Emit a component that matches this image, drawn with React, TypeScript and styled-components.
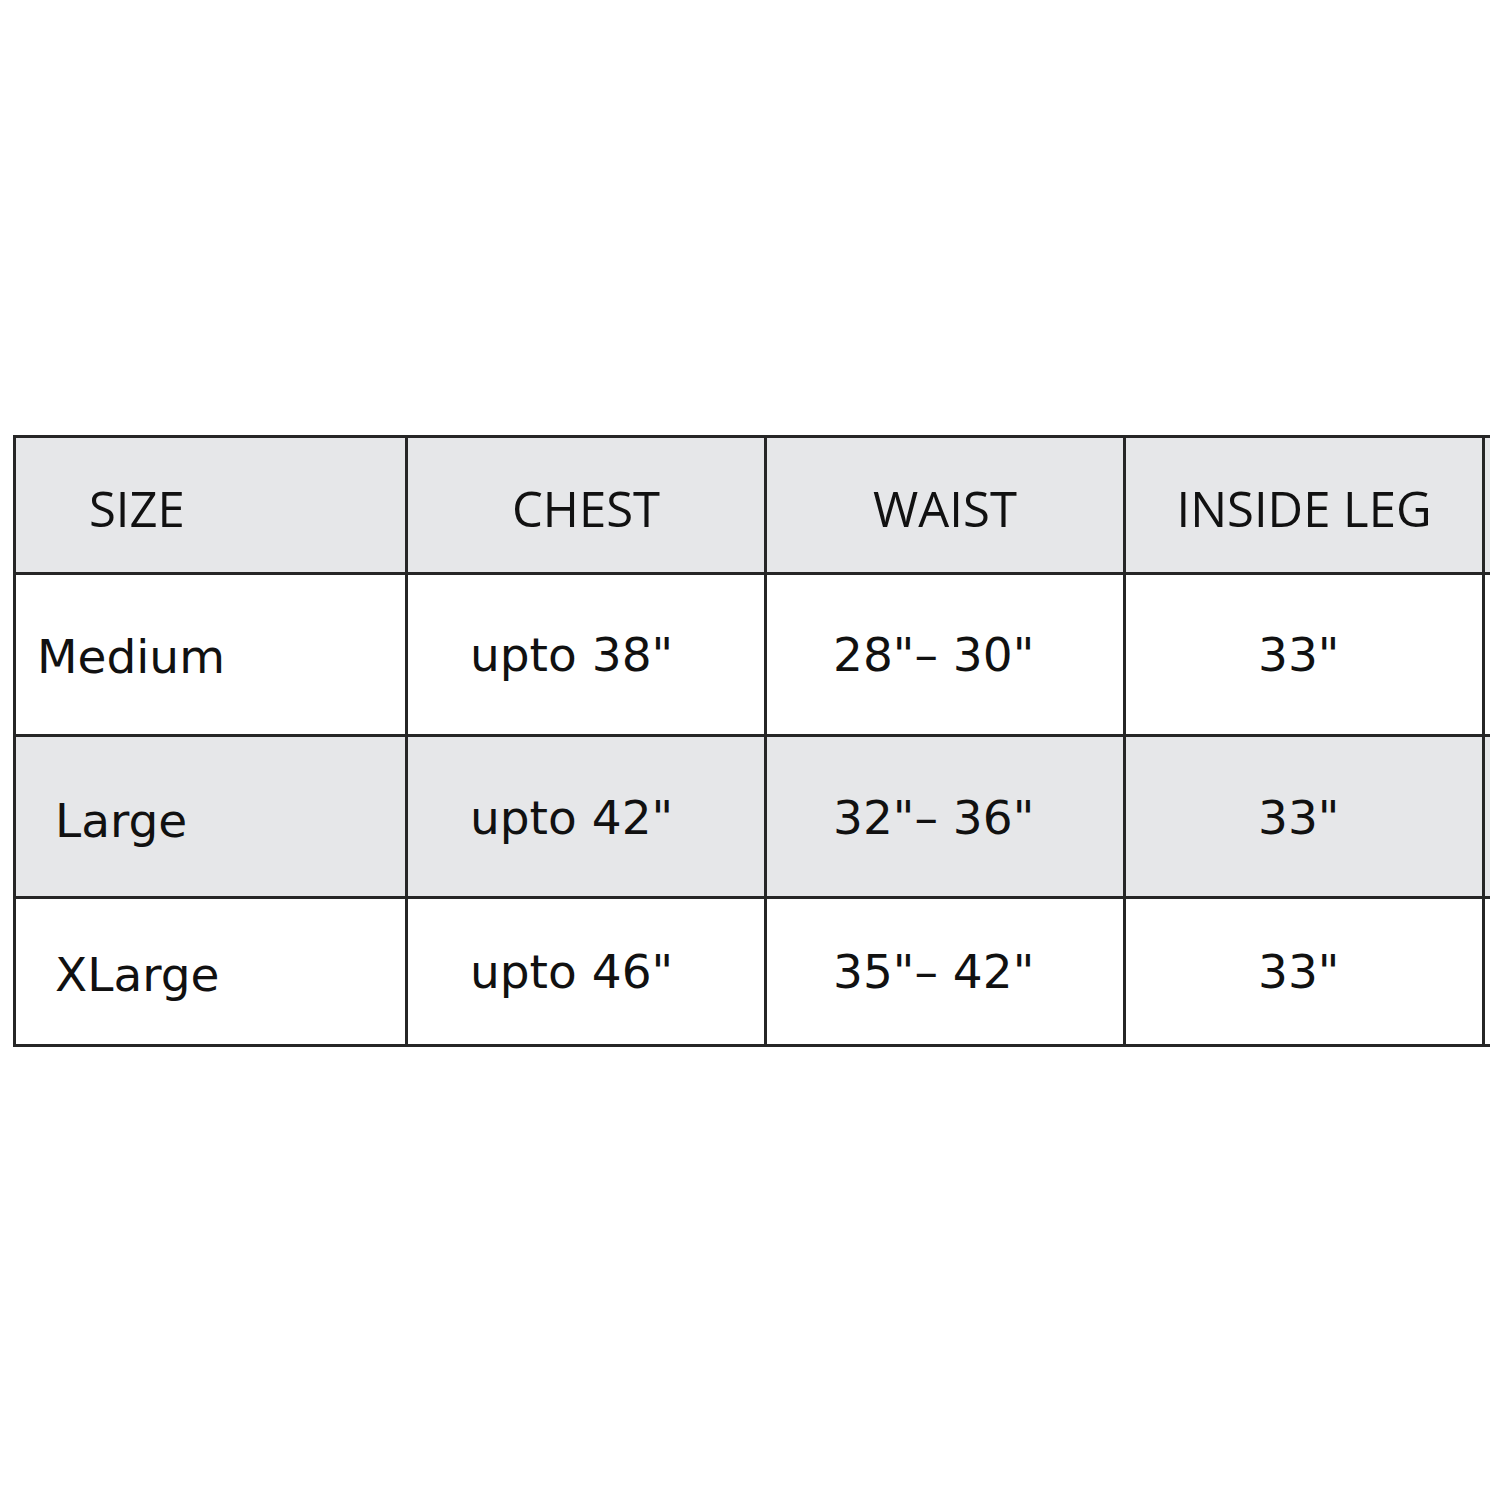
import styled, { createGlobalStyle } from 'styled-components';

const GlobalStyle = createGlobalStyle`
  html, body {
    margin: 0;
    padding: 0;
    background: #ffffff;
  }
  body {
    width: 1500px;
    height: 1500px;
    overflow: hidden;
  }
`;

const Page = styled.div`
  width: 1500px;
  height: 1500px;
  padding: 435px 10px 0 13px;
  box-sizing: border-box;
  background: #ffffff;
`;

const Table = styled.div`
  display: grid;
  grid-template-columns: 389px 356px 356px 356px 5px;
  grid-template-rows: 134px 159px 159px 145px;
  gap: 3px;
  padding: 3px 0 3px 3px;
  width: max-content;
  background: #262626;
`;

const Cell = styled.div<{ $shade?: boolean; $pad?: number; $center?: boolean; $dy?: number }>`
  display: flex;
  align-items: center;
  justify-content: ${p => (p.$center ? 'center' : 'flex-start')};
  padding-left: ${p => p.$pad ?? 0}px;
  padding-top: ${p => p.$dy ?? 0}px;
  box-sizing: border-box;
  background: ${p => (p.$shade ? '#e6e7e9' : '#ffffff')};
  color: #111111;
  white-space: nowrap;
  overflow: hidden;
`;

const HeadText = styled.span`
  font-family: 'Open Sans', 'Noto Sans', sans-serif;
  font-size: 49px;
  font-weight: 400;
`;

const BodyText = styled.span`
  font-family: 'DejaVu Sans', Verdana, sans-serif;
  font-size: 47px;
  letter-spacing: 0;
`;

const headers = [
  { label: 'SIZE', pad: 73, center: false },
  { label: 'CHEST', pad: 0, center: true },
  { label: 'WAIST', pad: 0, center: true },
  { label: 'INSIDE LEG', pad: 0, center: true },
];

const rows = [
  { size: 'Medium', sizePad: 21, chest: 'upto 38"', waist: '28"\u2013 30"', leg: '33"', shade: false, dy: 4 },
  { size: 'Large', sizePad: 39, chest: 'upto 42"', waist: '32"\u2013 36"', leg: '33"', shade: true, dy: 8 },
  { size: 'XLarge', sizePad: 39, chest: 'upto 46"', waist: '35"\u2013 42"', leg: '33"', shade: false, dy: 6 },
];

export default function App() {
  return (
    <Page>
      <GlobalStyle />
      <Table>
        {headers.map(h => (
          <Cell key={h.label} $shade $pad={h.pad} $center={h.center} $dy={6}>
            <HeadText>{h.label}</HeadText>
          </Cell>
        ))}
        <Cell $shade />
        {rows.map(r => [
          <Cell key={`${r.size}-s`} $shade={r.shade} $pad={r.sizePad} $dy={r.dy}>
            <BodyText>{r.size}</BodyText>
          </Cell>,
          <Cell key={`${r.size}-c`} $shade={r.shade} $pad={62} $dy={r.dy - 6}>
            <BodyText>{r.chest}</BodyText>
          </Cell>,
          <Cell key={`${r.size}-w`} $shade={r.shade} $pad={66} $dy={r.dy - 6}>
            <BodyText>{r.waist}</BodyText>
          </Cell>,
          <Cell key={`${r.size}-l`} $shade={r.shade} $pad={132} $dy={r.dy - 6}>
            <BodyText>{r.leg}</BodyText>
          </Cell>,
          <Cell key={`${r.size}-x`} $shade={r.shade} />,
        ])}
      </Table>
    </Page>
  );
}
